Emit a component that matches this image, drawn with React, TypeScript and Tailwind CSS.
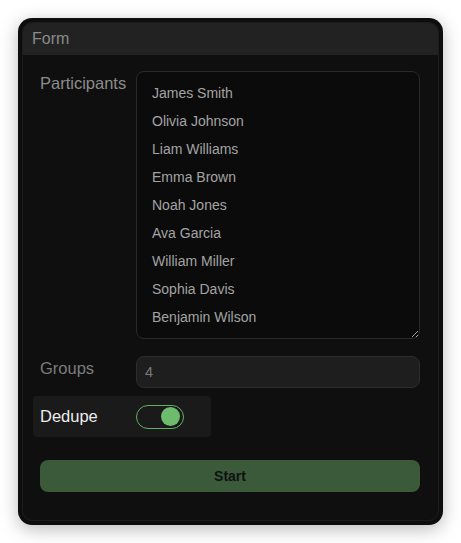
import { useState } from 'react';

const participants = [
  'James Smith',
  'Olivia Johnson',
  'Liam Williams',
  'Emma Brown',
  'Noah Jones',
  'Ava Garcia',
  'William Miller',
  'Sophia Davis',
  'Benjamin Wilson',
];

export default function App() {
  const [names, setNames] = useState(participants.join('\n'));
  const [groups, setGroups] = useState('4');
  const [dedupe, setDedupe] = useState(true);

  return (
    <div className="min-h-[543px] bg-white pt-[18px] pl-[18px] font-['Liberation_Sans',Arial,sans-serif]">
      <div className="w-[425px] rounded-[14px] bg-[#0d0d0d] p-1 shadow-[0_4px_18px_rgba(0,0,0,0.28)]">
        <div className="overflow-hidden rounded-[10px] border border-[#1d1d1d] bg-[#0f0f0f]">
          {/* header */}
          <div className="flex h-8 items-center bg-[#222222] px-[9px] text-[16px] text-[#8a8a8a]">
            Form
          </div>

          {/* body */}
          <div className="pt-4 pl-[17px] pr-[17px] pb-7">
            <div className="flex">
              <label className="w-24 shrink-0 text-[16.5px] leading-6 text-[#8c8c8c]">Participants</label>
              <textarea
                value={names}
                onChange={e => setNames(e.target.value)}
                className="h-[268px] w-[284px] resize-y rounded-lg border border-[#2a2a2a] bg-[#0b0b0b] px-[15px] py-[7px] text-[14px] leading-[28px] text-[#a3a3a3] outline-none"
              />
            </div>

            <div className="mt-[17px] flex items-start">
              <label className="w-24 shrink-0 text-[16.5px] leading-6 text-[#7c7c7c]">Groups</label>
              <input
                value={groups}
                onChange={e => setGroups(e.target.value)}
                className="h-8 w-[284px] rounded-lg border border-[#2c2c2c] bg-[#1e1e1e] px-2 text-[14.5px] text-[#7a7a7a] outline-none"
              />
            </div>

            <div className="-mx-[7px] mt-2 flex h-[41px] w-[178px] items-center rounded bg-[#1a1a1a] px-[7px]">
              <span className="w-24 shrink-0 text-[16.5px] text-[#ececec]">Dedupe</span>
              <button
                onClick={() => setDedupe(!dedupe)}
                className={`flex h-6 w-12 items-center rounded-full border px-[2px] ${dedupe ? 'justify-end border-[#62b062]' : 'justify-start border-[#555]'}`}
              >
                <span className={`mr-[1px] h-[19px] w-[19px] rounded-full ${dedupe ? 'bg-[#6dbb6d]' : 'bg-[#777]'}`} />
              </button>
            </div>

            <button className="mt-[23px] h-8 w-[380px] rounded-lg bg-[#3a5a39] text-[14px] font-semibold text-[#111111]">
              Start
            </button>
          </div>
        </div>
      </div>
    </div>
  );
}
